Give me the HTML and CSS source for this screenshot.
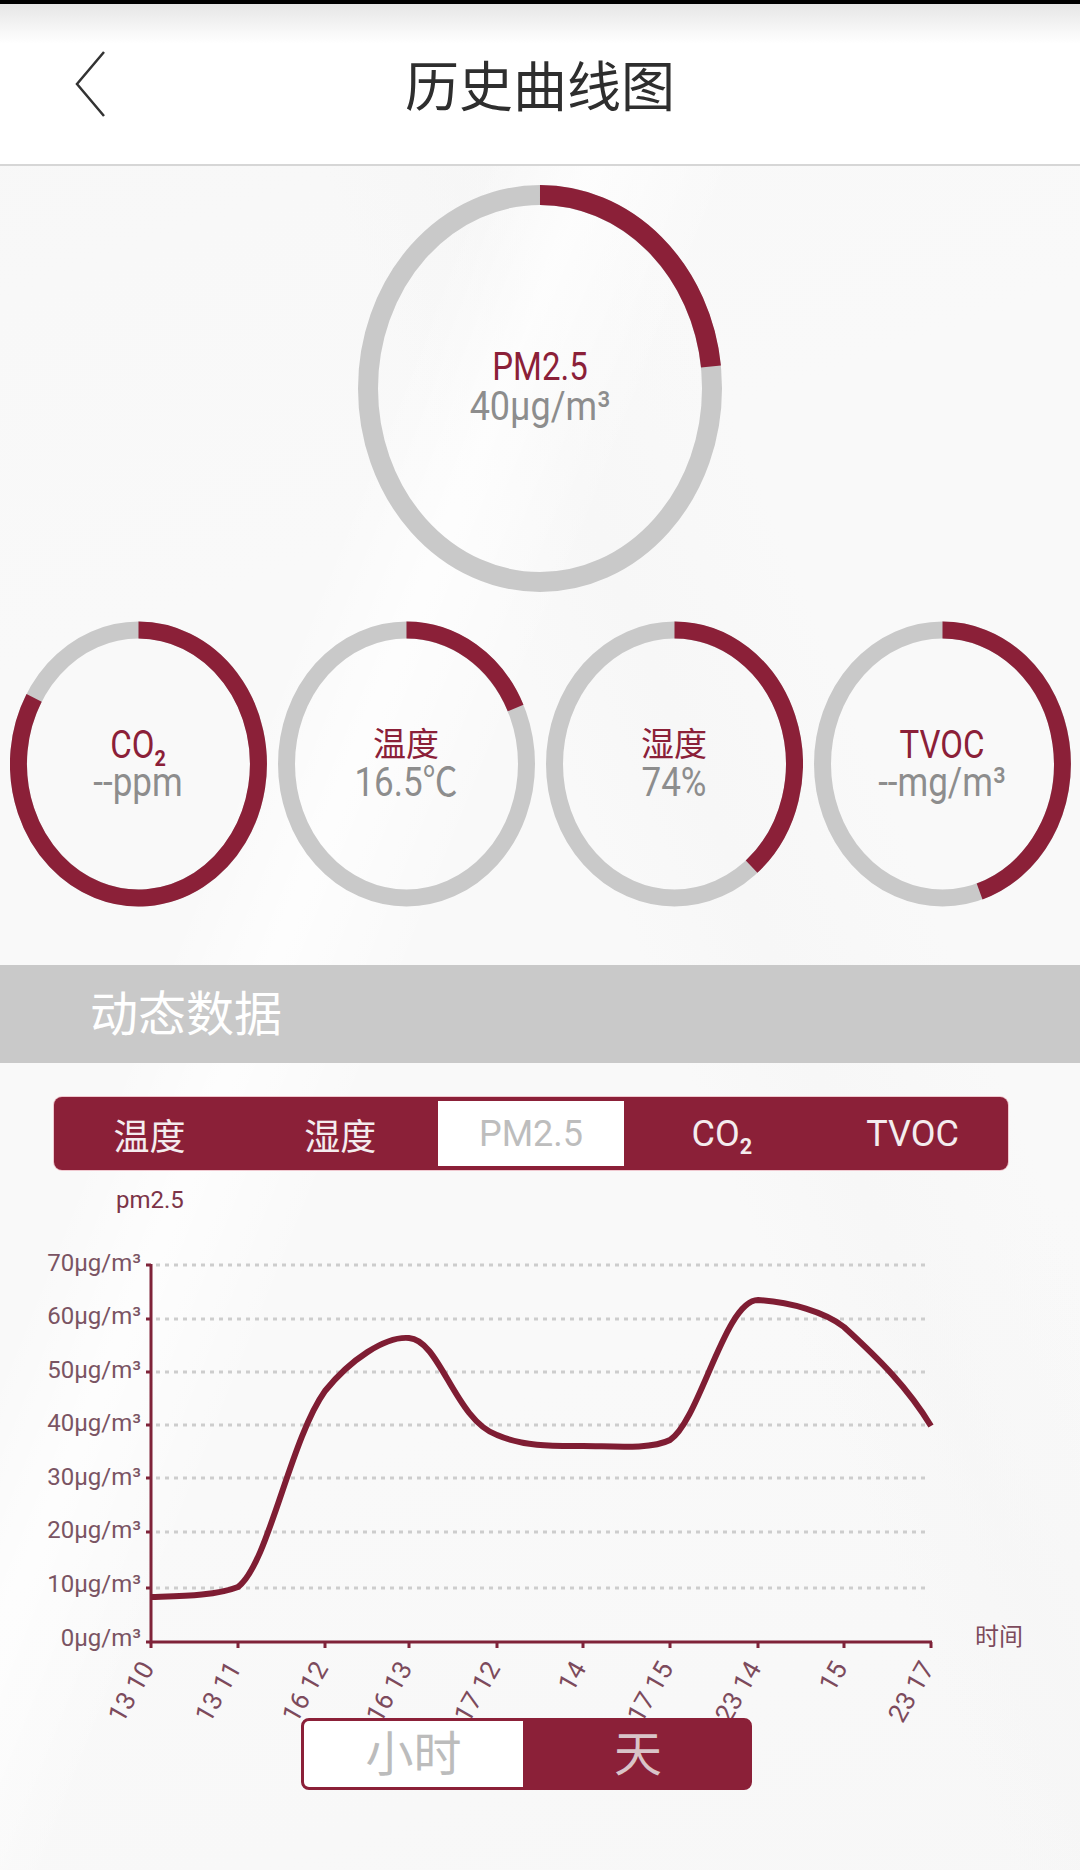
FILE: index.html
```html
<!DOCTYPE html>
<html lang="zh-CN">
<head>
<meta charset="utf-8">
<title>历史曲线图</title>
<link rel="stylesheet" href="styles.css">
</head>
<body>
<div class="screen">
  <div class="status-strip"></div>
  <header class="header">
    <svg class="back" viewBox="0 0 30 66" aria-label="back"><path d="M29 1 L2 33 L29 65"/></svg>
    <h1 class="title">历史曲线图</h1>
    <span></span>
  </header>

  <section class="rings">
    <div class="ring ring-big">
      <svg viewBox="0 0 364 407">
        <ellipse class="track" cx="182" cy="203.5" rx="172" ry="193.5"/>
        <path class="bar" d="M182 10 A172 193.5 0 0 1 353 181.5"/>
      </svg>
      <div class="ring-text"><span class="name">PM2.5</span><span class="val">40μg/m³</span></div>
    </div>
    <div class="ring-row">
      <div class="ring ring-small">
        <svg viewBox="0 0 257 286"><ellipse class="track" cx="128.5" cy="143" rx="120" ry="134"/><path class="bar" d="M128.5 9 A120 134 0 1 1 24.1 76.8"/></svg>
        <div class="ring-text"><span class="name">CO<sub>2</sub></span><span class="val">--ppm</span></div>
      </div>
      <div class="ring ring-small">
        <svg viewBox="0 0 257 286"><ellipse class="track" cx="128.5" cy="143" rx="120" ry="134"/><path class="bar" d="M128.5 9 A120 134 0 0 1 237.6 87"/></svg>
        <div class="ring-text"><span class="name cjk">温度</span><span class="val">16.5℃</span></div>
      </div>
      <div class="ring ring-small">
        <svg viewBox="0 0 257 286"><ellipse class="track" cx="128.5" cy="143" rx="120" ry="134"/><path class="bar" d="M128.5 9 A120 134 0 0 1 205.6 245.6"/></svg>
        <div class="ring-text"><span class="name cjk">湿度</span><span class="val">74%</span></div>
      </div>
      <div class="ring ring-small">
        <svg viewBox="0 0 257 286"><ellipse class="track" cx="128.5" cy="143" rx="120" ry="134"/><path class="bar" d="M128.5 9 A120 134 0 0 1 165.6 270.4"/></svg>
        <div class="ring-text"><span class="name">TVOC</span><span class="val">--mg/m³</span></div>
      </div>
    </div>
  </section>

  <div class="section-bar">动态数据</div>

  <nav class="tabs">
    <span class="tab cjk">温度</span>
    <span class="tab cjk">湿度</span>
    <span class="tab active">PM2.5</span>
    <span class="tab"><span>CO<sub>2</sub></span></span>
    <span class="tab">TVOC</span>
  </nav>

  <div class="unit">pm2.5</div>

  <svg class="chart" viewBox="0 1215 1080 515">
    <g class="grid">
      <line x1="156" x2="928" y1="1265" y2="1265"/>
      <line x1="156" x2="928" y1="1319" y2="1319"/>
      <line x1="156" x2="928" y1="1372" y2="1372"/>
      <line x1="156" x2="928" y1="1425" y2="1425"/>
      <line x1="156" x2="928" y1="1478" y2="1478"/>
      <line x1="156" x2="928" y1="1532" y2="1532"/>
      <line x1="156" x2="928" y1="1588" y2="1588"/>
    </g>
    <g class="axis">
      <path d="M151 1264 V1642 H932"/>
      <path d="M146 1265 h5 M146 1319 h5 M146 1372 h5 M146 1425 h5 M146 1478 h5 M146 1532 h5 M146 1588 h5 M146 1642 h5"/>
      <path d="M151 1642 v6 M238 1642 v6 M325 1642 v6 M409 1642 v6 M497 1642 v6 M583 1642 v6 M670 1642 v6 M758 1642 v6 M844 1642 v6 M931 1642 v6"/>
    </g>
    <g class="ylabels">
      <text x="141" y="1271">70μg/m³</text>
      <text x="141" y="1324">60μg/m³</text>
      <text x="141" y="1378">50μg/m³</text>
      <text x="141" y="1431">40μg/m³</text>
      <text x="141" y="1485">30μg/m³</text>
      <text x="141" y="1538">20μg/m³</text>
      <text x="141" y="1592">10μg/m³</text>
      <text x="141" y="1646">0μg/m³</text>
    </g>
    <g class="xlabels">
      <text transform="translate(155 1668) rotate(-60)">13 10</text>
      <text transform="translate(242 1668) rotate(-60)">13 11</text>
      <text transform="translate(329 1668) rotate(-60)">16 12</text>
      <text transform="translate(413 1668) rotate(-60)">16 13</text>
      <text transform="translate(501 1668) rotate(-60)">17 12</text>
      <text transform="translate(587 1668) rotate(-60)">14</text>
      <text transform="translate(674 1668) rotate(-60)">17 15</text>
      <text transform="translate(762 1668) rotate(-60)">23 14</text>
      <text transform="translate(848 1668) rotate(-60)">15</text>
      <text transform="translate(935 1668) rotate(-60)">23 17</text>
    </g>
    <text class="xname" x="975" y="1645">时间</text>
    <path class="curve" d="M151 1597 C180 1596 215 1596 238 1587 C268 1565 290 1440 325 1391 C350 1360 385 1336 409 1338 C440 1340 455 1420 497 1435 C525 1447 555 1446 583 1446 C610 1446 650 1450 670 1440 C700 1420 725 1300 758 1300 C790 1302 825 1312 844 1327 C880 1360 908 1388 931 1426"/>
  </svg>

  <div class="toggle">
    <span class="toggle-item off">小时</span>
    <span class="toggle-item on">天</span>
  </div>
</div>
</body>
</html>
```

FILE: styles.css
```css
* { box-sizing: border-box; }
html, body { margin: 0; padding: 0; }
body { font-family: Roboto, "Noto Sans CJK SC", sans-serif; }

.screen {
  width: 1080px;
  height: 1870px;
  overflow: hidden;
  background-color: #f9f9f9;
  background-image:
    linear-gradient(112deg, transparent 30%, rgba(255,255,255,.7) 36%, transparent 44%),
    linear-gradient(68deg, transparent 55%, rgba(245,245,245,.5) 62%, transparent 72%),
    linear-gradient(160deg, rgba(246,246,246,.6) 0%, transparent 30%, transparent 70%, rgba(246,246,246,.6) 100%);
}

.status-strip { height: 4px; background: #000; }

.header {
  height: 162px;
  display: grid;
  grid-template-columns: 1fr auto 1fr;
  align-items: center;
  background: linear-gradient(#e6e6e6 0, #f8f8f8 28px, #fff 40px);
  border-bottom: 2px solid #d6d6d6;
}
.back {
  width: 30px;
  height: 66px;
  margin-left: 75px;
  fill: none;
  stroke: #333;
  stroke-width: 2.5;
}
.title {
  margin: 0;
  font-size: 54px;
  font-weight: 400;
  line-height: 60px;
  color: #2e2e2e;
  font-family: "Noto Sans CJK SC", sans-serif;
}

.rings { display: flex; flex-direction: column; align-items: center; padding-top: 19px; }
.ring { display: grid; place-items: center; }
.ring > * { grid-area: 1 / 1; }
.ring svg { display: block; width: 100%; height: 100%; }
.ring-big { width: 364px; height: 407px; }
.ring-small { width: 268px; height: 286px; padding: 0 5.5px; }
.ring-row { display: flex; margin-top: 29px; width: 1072px; }

.track, .bar { fill: none; }
.track { stroke: #c9c9c9; }
.bar { stroke: #8b2038; }
.ring-big .track, .ring-big .bar { stroke-width: 20; }
.ring-small .track, .ring-small .bar { stroke-width: 17; }

.ring-text { display: flex; flex-direction: column; align-items: center; text-align: center; }
.ring-big .ring-text { margin-top: -5px; }
.name, .val { display: block; white-space: nowrap; transform: scaleY(1.15); }
.name { color: #8b2038; font-size: 33px; line-height: 40px; }
.val { color: #8d8d8d; font-size: 36px; line-height: 38px; }
.name.cjk { transform: none; }
.ring-small .name { font-size: 33px; line-height: 38px; }
.ring-small .val { font-size: 35px; line-height: 38px; }
sub { font-size: .6em; line-height: 0; font-weight: 700; }

.section-bar {
  margin-top: 58px;
  height: 98px;
  padding: 0 0 9px 90px;
  display: flex;
  align-items: center;
  background: #c9c9c9;
  color: #fff;
  font-size: 48px;
  font-family: "Noto Sans CJK SC", sans-serif;
}

.tabs {
  margin: 34px 0 0 54px;
  width: 954px;
  height: 73px;
  padding: 4px 0;
  display: grid;
  grid-template-columns: repeat(5, 1fr);
  background: #8b2038;
  border-radius: 8px;
  box-shadow: 0 0 0 1px #f0c8cf;
}
.tab {
  display: flex;
  align-items: center;
  justify-content: center;
  color: #f4ecee;
  font-size: 36px;
}
.tab.active { background: #fff; color: #bdbdbd; margin: 0 2px; }

.unit {
  margin: 15px 0 0 116px;
  height: 30px;
  line-height: 30px;
  font-size: 24px;
  color: #7c3448;
}

.chart { display: block; width: 1080px; height: 515px; }
.grid line { stroke: #cdcdcd; stroke-width: 3; stroke-dasharray: 4 5; }
.axis path { fill: none; stroke: #7f2339; stroke-width: 3; }
.ylabels text { text-anchor: end; font-size: 24px; fill: #7a5463; }
.xlabels text { text-anchor: end; font-size: 26px; fill: #7c4a5c; }
.xname { font-size: 24px; fill: #7c4a5c; font-family: "Noto Sans CJK SC", sans-serif; }
.curve { fill: none; stroke: #7f1d33; stroke-width: 6; stroke-linejoin: round; }

.toggle {
  position: relative;
  margin: -12px 0 0 301px;
  width: 451px;
  height: 72px;
  display: grid;
  grid-template-columns: 219px 1fr;
  border: 3px solid #8b2038;
  border-radius: 8px;
  background: #8b2038;
}
.toggle-item {
  display: flex;
  align-items: center;
  justify-content: center;
  padding-bottom: 8px;
  font-size: 48px;
  line-height: 48px;
  font-family: "Noto Sans CJK SC", sans-serif;
}
.off { background: #fff; color: #bcbcbc; border-radius: 5px 0 0 5px; }
.on { color: #d9c4c8; padding-left: 4px; }
```
